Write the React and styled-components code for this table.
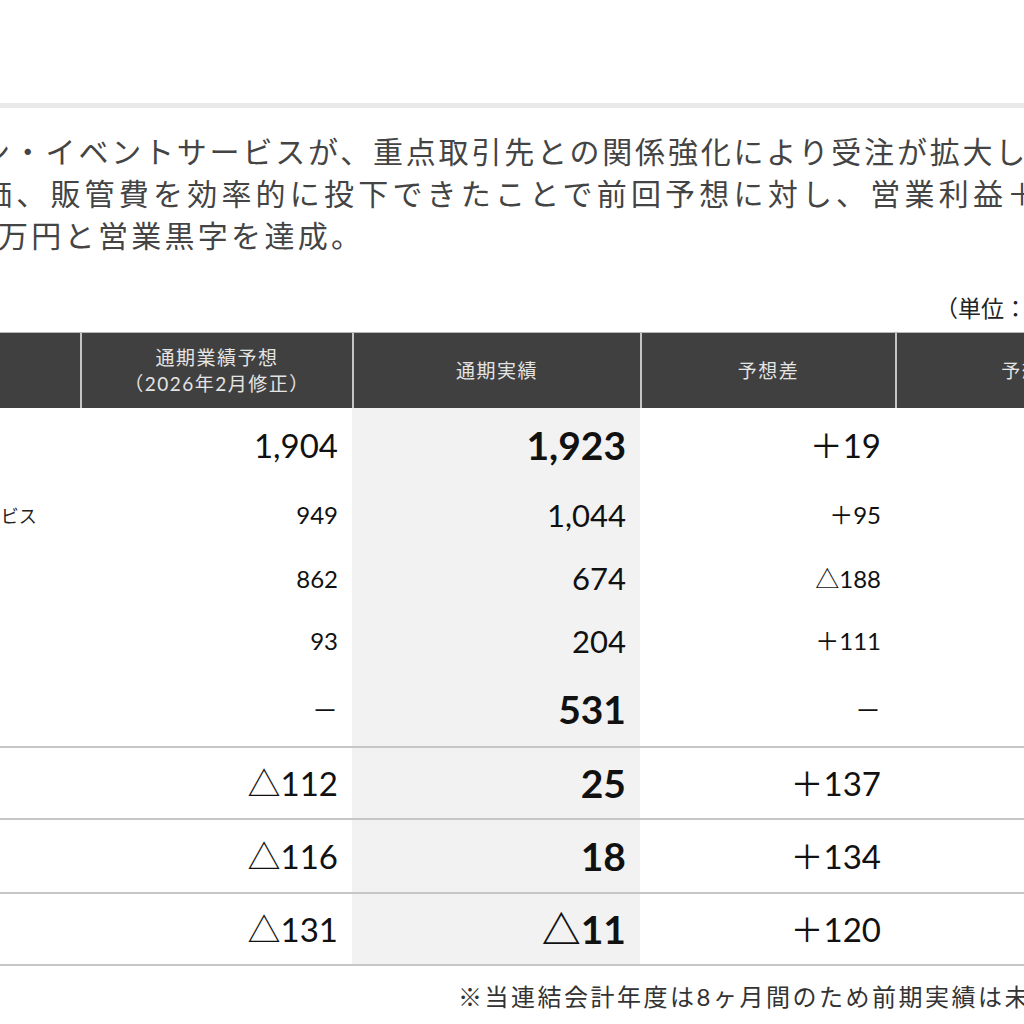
import React from "react";
import styled, { createGlobalStyle } from "styled-components";

const GlobalStyle = createGlobalStyle`
  html, body {
    margin: 0;
    padding: 0;
    background: #fff;
  }
  body {
    overflow: hidden;
    font-family: Lato, "Noto Sans CJK JP", sans-serif;
  }
`;

const JP = `"Noto Sans CJK JP", sans-serif`;
const NUM = `Lato, "Noto Sans CJK JP", sans-serif`;

// the view is a crop: the page starts 271px left of the frame
const Frame = styled.div`
  width: 1024px;
  height: 1024px;
  overflow: hidden;
`;

const Inner = styled.div`
  margin-left: -271px;
  width: 1438px;
`;

const Band = styled.div`
  margin-top: 103px;
  height: 5px;
  background: #e9e9e9;
`;

const Lead = styled.p`
  margin: 21px 0 0;
  font-family: ${JP};
  font-size: 30px;
  line-height: 42px;
  color: #444;
`;

const Line = styled.span`
  display: block;
  white-space: nowrap;
  margin-left: ${(p) => p.$indent + 271}px;
  letter-spacing: ${(p) => p.$spacing}px;
`;

const UnitRow = styled.div`
  margin: 37px 0 10px;
  display: flex;
  justify-content: flex-end;
  padding-right: 48px;
  font-family: ${JP};
  font-size: 23px;
  line-height: 30px;
  color: #222;
`;

const Grid = styled.div`
  display: grid;
  grid-template-columns: 351px 272px 288px 255px 272px;
  border-top: 1px solid #b8b8b8;
`;

const HeadCell = styled.div`
  box-sizing: border-box;
  height: 75px;
  background: #404040;
  color: #e4e4e4;
  font-family: ${NUM};
  font-size: 19px;
  letter-spacing: 1.5px;
  line-height: 26px;
  display: flex;
  flex-direction: column;
  align-items: center;
  justify-content: center;
  text-align: center;
  border-left: ${(p) => (p.$first ? "none" : "2px solid #c4c4c4")};
`;

const Cell = styled.div`
  box-sizing: border-box;
  height: ${(p) => p.$h}px;
  display: flex;
  align-items: center;
  justify-content: flex-end;
  padding-right: 14px;
  font-family: ${NUM};
  font-size: ${(p) => p.$size}px;
  font-weight: ${(p) => (p.$bold ? 700 : 400)};
  line-height: 1;
  color: #111;
  background: ${(p) => (p.$shade ? "#f2f2f2" : "#fff")};
  border-bottom: ${(p) => (p.$ruled ? "2px solid #c6c6c6" : "none")};
`;

const LabelCell = styled(Cell)`
  justify-content: flex-start;
  padding-right: 0;
  padding-left: 20px;
  font-family: ${JP};
  font-size: 18px;
  color: #222;
`;

const Dash = styled.span`
  font-family: ${JP};
  font-size: 26px;
`;

const Note = styled.div`
  margin-top: 16px;
  display: flex;
  justify-content: flex-end;
  padding-right: 83px;
  font-family: ${NUM};
  font-size: 24px;
  letter-spacing: 2.5px;
  line-height: 30px;
  color: #333;
  white-space: nowrap;
`;

const rows = [
  { label: "売上高", fc: "1,904", act: "1,923", diff: "＋19", ratio: "101.0%", h: 75, main: true },
  { label: "プロモーション・イベントサービス", fc: "949", act: "1,044", diff: "＋95", ratio: "110.0%", h: 64 },
  { label: "ＤＸ・マーケティングサービス", fc: "862", act: "674", diff: "△188", ratio: "78.2%", h: 63 },
  { label: "その他", fc: "93", act: "204", diff: "＋111", ratio: "219.4%", h: 62 },
  { label: "EBITDA", fc: "－", act: "531", diff: "－", ratio: "－", h: 76, main: true, ruled: true },
  { label: "営業利益", fc: "△112", act: "25", diff: "＋137", ratio: "－", h: 72, main: true, ruled: true },
  { label: "経常利益", fc: "△116", act: "18", diff: "＋134", ratio: "－", h: 74, main: true, ruled: true },
  { label: "当期純利益", fc: "△131", act: "△11", diff: "＋120", ratio: "－", h: 72, main: true, ruled: true },
];

const show = (v) => (v === "－" ? <Dash>－</Dash> : v);

export default function App() {
  return (
    <Frame>
      <GlobalStyle />
      <Inner>
        <Band />
        <Lead>
          <Line $indent={-20} $spacing={2.8}>
            ン・イベントサービスが、重点取引先との関係強化により受注が拡大し、
          </Line>
          <Line $indent={-18} $spacing={4.2}>
            価、販管費を効率的に投下できたことで前回予想に対し、営業利益＋
          </Line>
          <Line $indent={-2} $spacing={3.3}>
            万円と営業黒字を達成。
          </Line>
        </Lead>
        <UnitRow>（単位：百万円）</UnitRow>
        <Grid>
          <HeadCell $first />
          <HeadCell>
            <span>通期業績予想</span>
            <span>（2026年2月修正）</span>
          </HeadCell>
          <HeadCell>通期実績</HeadCell>
          <HeadCell>予想差</HeadCell>
          <HeadCell>予想比</HeadCell>
          {rows.map((r) => {
            const small = r.main ? 33 : 24;
            const mid = r.main ? 39 : 31;
            return (
              <React.Fragment key={r.label}>
                <LabelCell $h={r.h} $ruled={r.ruled} $size={18}>
                  {r.label}
                </LabelCell>
                <Cell $h={r.h} $ruled={r.ruled} $size={small}>
                  {show(r.fc)}
                </Cell>
                <Cell $h={r.h} $ruled={r.ruled} $size={mid} $bold={r.main} $shade>
                  {show(r.act)}
                </Cell>
                <Cell $h={r.h} $ruled={r.ruled} $size={small}>
                  {show(r.diff)}
                </Cell>
                <Cell $h={r.h} $ruled={r.ruled} $size={small}>
                  {show(r.ratio)}
                </Cell>
              </React.Fragment>
            );
          })}
        </Grid>
        <Note>※当連結会計年度は8ヶ月間のため前期実績は未記載</Note>
      </Inner>
    </Frame>
  );
}
